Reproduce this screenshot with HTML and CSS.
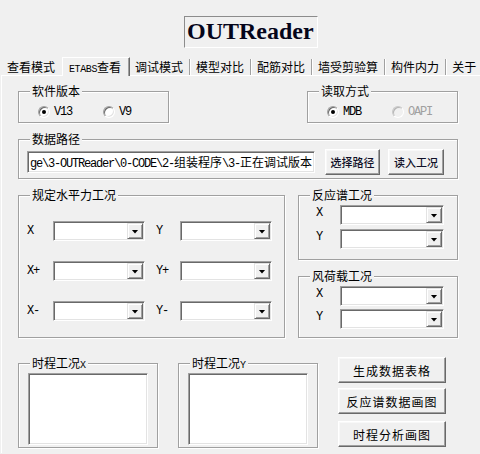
FILE: index.html
```html
<!DOCTYPE html>
<html lang="zh">
<head>
<meta charset="utf-8">
<title>OUTReader</title>
<link rel="stylesheet" href="styles.css">
</head>
<body>
<div class="window">
  <header class="head"><div class="title">OUTReader</div></header>
  <nav class="tabs">
    <div class="tab first">查看模式</div>
    <div class="tab active"><span class="lat tiny">ETABS</span>查看</div>
    <div class="tab after">调试模式</div>
    <div class="tab">模型对比</div>
    <div class="tab">配筋对比</div>
    <div class="tab">墙受剪验算</div>
    <div class="tab">构件内力</div>
    <div class="tab last">关于</div>
  </nav>
  <main class="panel">
    <div class="row1">
      <fieldset class="frame opts">
        <legend>软件版本</legend>
        <div class="opt"><span class="radio on"></span><span class="lat">V13</span></div>
        <div class="opt next"><span class="radio"></span><span class="lat">V9</span></div>
      </fieldset>
      <fieldset class="frame opts">
        <legend>读取方式</legend>
        <div class="opt"><span class="radio on"></span><span class="lat">MDB</span></div>
        <div class="opt next disabled"><span class="radio"></span><span class="lat">OAPI</span></div>
      </fieldset>
    </div>

    <fieldset class="frame path">
      <legend>数据路径</legend>
      <div class="field textbox"><span class="lat">ge\3-OUTReader\0-CODE\2-</span>组装程序<span class="lat">\3-</span>正在调试版本</div>
      <button class="btn small b1">选择路径</button>
      <button class="btn small b2">读入工况</button>
    </fieldset>

    <div class="row3">
      <fieldset class="frame horiz">
        <legend>规定水平力工况</legend>
        <div class="crow">
          <span class="lat lbl">X</span><div class="field combo"><span class="drop"></span></div>
          <span class="lat lbl lbl2">Y</span><div class="field combo"><span class="drop"></span></div>
        </div>
        <div class="crow">
          <span class="lat lbl">X+</span><div class="field combo"><span class="drop"></span></div>
          <span class="lat lbl lbl2">Y+</span><div class="field combo"><span class="drop"></span></div>
        </div>
        <div class="crow">
          <span class="lat lbl">X-</span><div class="field combo"><span class="drop"></span></div>
          <span class="lat lbl lbl2">Y-</span><div class="field combo"><span class="drop"></span></div>
        </div>
      </fieldset>
      <div class="rcol">
        <fieldset class="frame side spec">
          <legend>反应谱工况</legend>
          <div class="srow"><span class="lat slbl">X</span><div class="field combo wide"><span class="drop"></span></div></div>
          <div class="srow"><span class="lat slbl">Y</span><div class="field combo wide"><span class="drop"></span></div></div>
        </fieldset>
        <fieldset class="frame side wind">
          <legend>风荷载工况</legend>
          <div class="srow"><span class="lat slbl">X</span><div class="field combo wide"><span class="drop"></span></div></div>
          <div class="srow"><span class="lat slbl">Y</span><div class="field combo wide"><span class="drop"></span></div></div>
        </fieldset>
      </div>
    </div>

    <div class="row4">
      <fieldset class="frame hist">
        <legend>时程工况<span class="lat small">X</span></legend>
        <div class="field listbox"></div>
      </fieldset>
      <fieldset class="frame hist">
        <legend>时程工况<span class="lat small">Y</span></legend>
        <div class="field listbox"></div>
      </fieldset>
      <div class="actions">
        <button class="btn big">生成数据表格</button>
        <button class="btn big g1">反应谱数据画图</button>
        <button class="btn big g2">时程分析画图</button>
      </div>
    </div>
  </main>
</div>
</body>
</html>
```

FILE: styles.css
```css
html, body {
  margin: 0;
  padding: 0;
}
body {
  background: #f0f0f0;
  font-family: "Noto Sans CJK SC", "Noto Sans", sans-serif;
  font-size: 12px;
  color: #000;
  width: 480px;
  height: 454px;
  overflow: hidden;
}
.window {
  width: 480px;
  height: 454px;
}
.lat {
  font-family: "Liberation Mono", "DejaVu Sans Mono", monospace;
  font-size: 12px;
  letter-spacing: -1.2px;
}
.lat.tiny {
  font-size: 10px;
  letter-spacing: -0.4px;
}
.lat.small {
  font-size: 10px;
  letter-spacing: 0;
}

/* title */
.head {
  height: 57px;
  padding-top: 16px;
  box-sizing: border-box;
}
.title {
  margin-left: 184px;
  width: 134px;
  height: 32px;
  box-sizing: border-box;
  border: 1px solid;
  border-color: #8c8c8c #fff #fff #8c8c8c;
  padding-left: 2px;
  font: bold 24px/29px "Liberation Serif", "Times New Roman", serif;
  color: #05051a;
  white-space: nowrap;
}

/* tabs */
.tabs {
  display: flex;
  align-items: flex-end;
  height: 18px;
  position: relative;
  z-index: 2;
}
.tab {
  height: 16px;
  line-height: 16px;
  padding: 0 6px;
  border-right: 1px solid #a0a0a0;
  box-shadow: 1px 0 0 #fff;
  white-space: nowrap;
}
.tab.first {
  padding: 0 7px;
  border-right: 0;
  box-shadow: none;
}
.tab.active {
  height: 18px;
  line-height: 17px;
  margin-bottom: -1px;
  padding: 0 8px 0 6px;
  background: #f0f0f0;
  border-top: 1px solid #fff;
  border-left: 1px solid #fff;
  border-right: 1px solid #696969;
  box-shadow: inset -1px 0 0 #a0a0a0;
}
.tab.after {
  padding-left: 5px;
}
.tab.last {
  border-right: 0;
  box-shadow: none;
}

/* panel */
.panel {
  margin-left: 1px;
  border-top: 1px solid #fff;
  border-left: 1px solid #fff;
  padding: 8px 0 0 16px;
  height: 378px;
  box-sizing: border-box;
  display: flex;
  flex-direction: column;
  width: 479px;
}

/* frames */
.frame {
  margin: 0;
  padding: 0;
  min-width: 0;
  box-sizing: border-box;
  border: 1px solid #a0a0a0;
  box-shadow: inset 1px 1px 0 #fff, 1px 1px 0 #fff;
}
.frame legend {
  margin-left: 11px;
  padding: 0 2px;
  line-height: 14px;
  height: 14px;
  background: #f0f0f0;
  font-size: 12px;
  white-space: nowrap;
}

.row1 {
  display: flex;
  justify-content: space-between;
  width: 440px;
}
.opts {
  width: 151px;
  height: 39px;
  display: flex;
  align-items: center;
  padding-top: 4px;
}
.opt {
  display: flex;
  align-items: center;
  height: 16px;
  margin-left: 19px;
}
.opt.next {
  margin-left: 31px;
}
.opt.disabled {
  color: #a0a0a0;
}
.radio {
  width: 12px;
  height: 12px;
  box-sizing: border-box;
  border-radius: 50%;
  background: #fff;
  border: 1px solid;
  border-color: #a0a0a0 #fff #fff #a0a0a0;
  box-shadow: inset 1px 1px 0 #696969, inset -1px -1px 0 #e3e3e3;
  display: flex;
  align-items: center;
  justify-content: center;
  margin-right: 4px;
}
.radio.on::after {
  content: "";
  width: 4px;
  height: 4px;
  border-radius: 50%;
  background: #000;
}
.disabled .radio {
  background: #f0f0f0;
  border-color: #c8c8c8 #fff #fff #c8c8c8;
  box-shadow: inset 1px 1px 0 #b4b4b4;
}

/* sunken field */
.field {
  box-sizing: border-box;
  background: #fff;
  border: 1px solid;
  border-color: #a0a0a0 #fff #fff #a0a0a0;
  box-shadow: inset 1px 1px 0 #696969, inset -1px -1px 0 #e3e3e3;
}

.path {
  margin-top: 9px;
  width: 440px;
  height: 47px;
  display: flex;
  align-items: center;
  padding-top: 3px;
}
.textbox {
  margin-left: 8px;
  width: 288px;
  height: 22px;
  line-height: 19px;
  padding-left: 2px;
  white-space: nowrap;
  overflow: hidden;
  font-size: 12px;
}

/* buttons */
.btn {
  margin: 0;
  padding: 0;
  box-sizing: border-box;
  background: #f0f0f0;
  border: 1px solid;
  border-color: #fff #696969 #696969 #fff;
  box-shadow: inset -1px -1px 0 #a0a0a0, inset 1px 1px 0 #f8f8f8;
  font-family: "Noto Sans CJK SC", sans-serif;
  color: #000;
  white-space: nowrap;
}
.btn.small {
  height: 26px;
  font-size: 11px;
  font-weight: 500;
  color: #101028;
}
.b1 {
  width: 55px;
  margin-left: 10px;
}
.b2 {
  width: 56px;
  margin-left: 8px;
}

/* row 3 */
.row3 {
  margin-top: 9px;
  display: flex;
  width: 440px;
}
.horiz {
  width: 267px;
  height: 150px;
  padding-top: 19px;
  display: flex;
  flex-direction: column;
  gap: 20px;
}
.crow {
  display: flex;
  align-items: center;
  height: 20px;
  padding-left: 8px;
}
.lbl {
  width: 26px;
}
.lbl2 {
  margin-left: 11px;
  width: 24px;
}
.combo {
  width: 92px;
  height: 20px;
  padding: 1px;
  display: flex;
  justify-content: flex-end;
}
.combo.wide {
  width: 104px;
}
.drop {
  width: 16px;
  height: 16px;
  box-sizing: border-box;
  background: #f0f0f0;
  border: 1px solid;
  border-color: #e3e3e3 #696969 #696969 #e3e3e3;
  box-shadow: inset 1px 1px 0 #fff, inset -1px -1px 0 #a0a0a0;
  display: flex;
  align-items: center;
  justify-content: center;
}
.drop::after {
  content: "";
  width: 7px;
  height: 4px;
  margin-top: 1px;
  background: #000;
  clip-path: polygon(0 0, 100% 0, 50% 100%);
}

.rcol {
  margin-left: 13px;
  width: 160px;
  display: flex;
  flex-direction: column;
}
.side {
  width: 160px;
  padding-top: 3px;
  display: flex;
  flex-direction: column;
}
.spec {
  height: 72px;
  gap: 4px;
}
.wind {
  margin-top: 9px;
  height: 69px;
  gap: 3px;
}
.srow {
  display: flex;
  align-items: flex-start;
  height: 20px;
  padding-left: 17px;
}
.slbl {
  width: 24px;
  line-height: 16px;
}

/* row 4 */
.row4 {
  margin-top: 18px;
  display: flex;
  width: 440px;
}
.hist {
  width: 140px;
  height: 92px;
  padding-top: 3px;
  margin-right: 20px;
}
.listbox {
  margin-left: 9px;
  width: 120px;
  height: 72px;
}
.actions {
  padding-top: 1px;
  display: flex;
  flex-direction: column;
}
.btn.big {
  width: 108px;
  height: 26px;
  font-size: 12px;
  letter-spacing: 1px;
}
.g1 {
  margin-top: 5px;
}
.g2 {
  margin-top: 7px;
}
```
